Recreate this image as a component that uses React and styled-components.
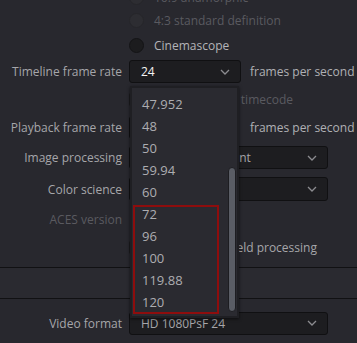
import React from 'react';
import styled, { createGlobalStyle } from 'styled-components';

const GlobalStyle = createGlobalStyle`
  html, body {
    margin: 0;
    padding: 0;
    background: #28282e;
  }
  body {
    font-family: "Open Sans", "Noto Sans", sans-serif;
    font-size: 12px;
    color: #a6a6aa;
  }
`;

const Page = styled.div`
  position: relative;
  width: 357px;
  height: 343px;
  overflow: hidden;
  background: #28282e;
`;

const Rows = styled.div`
  display: flex;
  flex-direction: column;
  margin-top: -14px;
`;

const Row = styled.div`
  display: grid;
  grid-template-columns: 122px 1fr;
  column-gap: 7px;
  align-items: center;
  height: ${(p) => p.h}px;
`;

const Label = styled.div`
  text-align: right;
  white-space: nowrap;
  color: ${(p) => (p.dim ? '#5a5a60' : '#a6a6aa')};
`;

const Control = styled.div`
  display: flex;
  align-items: center;
  white-space: nowrap;
`;

const RadioDot = styled.span`
  width: 15px;
  height: 15px;
  box-sizing: border-box;
  border-radius: 50%;
  flex: none;
  background: ${(p) => (p.dim ? '#2d2d32' : '#1c1c1e')};
  border: 1px solid ${(p) => (p.dim ? '#26262a' : '#141416')};
  margin-right: 10px;
`;

const Text = styled.span`
  color: ${(p) => (p.dim ? '#5a5a60' : p.bright ? '#b4b4b8' : '#a6a6aa')};
`;

const SelectBox = styled.div`
  box-sizing: border-box;
  width: ${(p) => p.w || 112}px;
  height: ${(p) => p.hgt || 23}px;
  background: #1d1d20;
  border: 1px solid #101012;
  border-radius: 3px;
  display: flex;
  align-items: center;
  justify-content: space-between;
  padding: 0 10px 0 11px;
  color: ${(p) => (p.active ? '#f4f4f4' : '#a6a6aa')};
  flex: none;
  overflow: hidden;
  white-space: nowrap;
`;

const Suffix = styled.span`
  margin-left: ${(p) => p.gap || 9}px;
  color: #b0b0b4;
`;

const CheckBox = styled.span`
  width: 13px;
  height: 13px;
  border-radius: 2px;
  background: #1c1c1e;
  flex: none;
  margin-right: ${(p) => p.gap || 8}px;
`;

const Section = styled.div`
  margin-top: 7px;
  height: 30px;
  border-top: 1px solid #111113;
  border-bottom: 1px solid #111113;
  background: #2a2a30;
`;

const Menu = styled.div`
  position: absolute;
  left: 130px;
  top: 86px;
  width: 109px;
  height: 232px;
  box-sizing: border-box;
  background: #2a2a30;
  border: 2px solid #1f1f23;
  box-shadow: 0 1px 3px rgba(0, 0, 0, 0.6);
  padding-top: 5px;
  font-size: 13px;
`;

const MenuItem = styled.div`
  height: 22px;
  line-height: 22px;
  padding-left: 10px;
  color: #adadb1;
`;

const Highlight = styled.div`
  position: absolute;
  left: 1px;
  top: 117px;
  width: 86px;
  height: 109px;
  box-sizing: border-box;
  border: 2px solid #8e0d0d;
`;

const ScrollThumb = styled.div`
  position: absolute;
  left: 96px;
  top: 79px;
  width: 8px;
  height: 145px;
  box-sizing: border-box;
  background: #5a5d65;
  border: 1px solid #1d1d21;
  border-radius: 4px;
`;

const Chevron = () => (
  <svg width="10" height="6" viewBox="0 0 10 6">
    <path d="M1 1 L5 5 L9 1" fill="none" stroke="#8c8c90" strokeWidth="1.3" />
  </svg>
);

const Select = ({ children, ...rest }) => (
  <SelectBox {...rest}>
    <span>{children}</span>
    <Chevron />
  </SelectBox>
);

const rates = ['47.952', '48', '50', '59.94', '60', '72', '96', '100', '119.88', '120'];

export default function App() {
  return (
    <Page>
      <GlobalStyle />
      <Rows>
        <Row h={23}>
          <Label />
          <Control>
            <RadioDot dim />
            <Text dim>16:9 anamorphic</Text>
          </Control>
        </Row>
        <Row h={23}>
          <Label />
          <Control>
            <RadioDot dim />
            <Text dim>4:3 standard definition</Text>
          </Control>
        </Row>
        <Row h={26}>
          <Label />
          <Control>
            <RadioDot />
            <Text bright>Cinemascope</Text>
          </Control>
        </Row>
        <Row h={27}>
          <Label>Timeline frame rate</Label>
          <Control>
            <Select active>24</Select>
            <Suffix>frames per second</Suffix>
          </Control>
        </Row>
        <Row h={28}>
          <Label />
          <Control>
            <CheckBox gap={8} />
            <Text dim>Use drop frame timecode</Text>
          </Control>
        </Row>
        <Row h={29}>
          <Label>Playback frame rate</Label>
          <Control>
            <Select w={109}>24</Select>
            <Suffix gap={12}>frames per second</Suffix>
          </Control>
        </Row>
        <Row h={31}>
          <Label>Image processing</Label>
          <Control>
            <Select w={199}>32-bit floating point</Select>
          </Control>
        </Row>
        <Row h={32}>
          <Label>Color science</Label>
          <Control>
            <Select w={199} hgt={24}>DaVinci YRGB</Select>
          </Control>
        </Row>
        <Row h={29}>
          <Label dim>ACES version</Label>
          <Control />
        </Row>
        <Row h={26}>
          <Label />
          <Control>
            <CheckBox gap={13} />
            <Text>Enable video field processing</Text>
          </Control>
        </Row>
      </Rows>
      <Section />
      <Row h={48}>
        <Label>Video format</Label>
        <Control>
          <Select w={199}>HD 1080PsF 24</Select>
        </Control>
      </Row>
      <Menu>
        {rates.map((r) => (
          <MenuItem key={r}>{r}</MenuItem>
        ))}
        <Highlight />
        <ScrollThumb />
      </Menu>
    </Page>
  );
}
